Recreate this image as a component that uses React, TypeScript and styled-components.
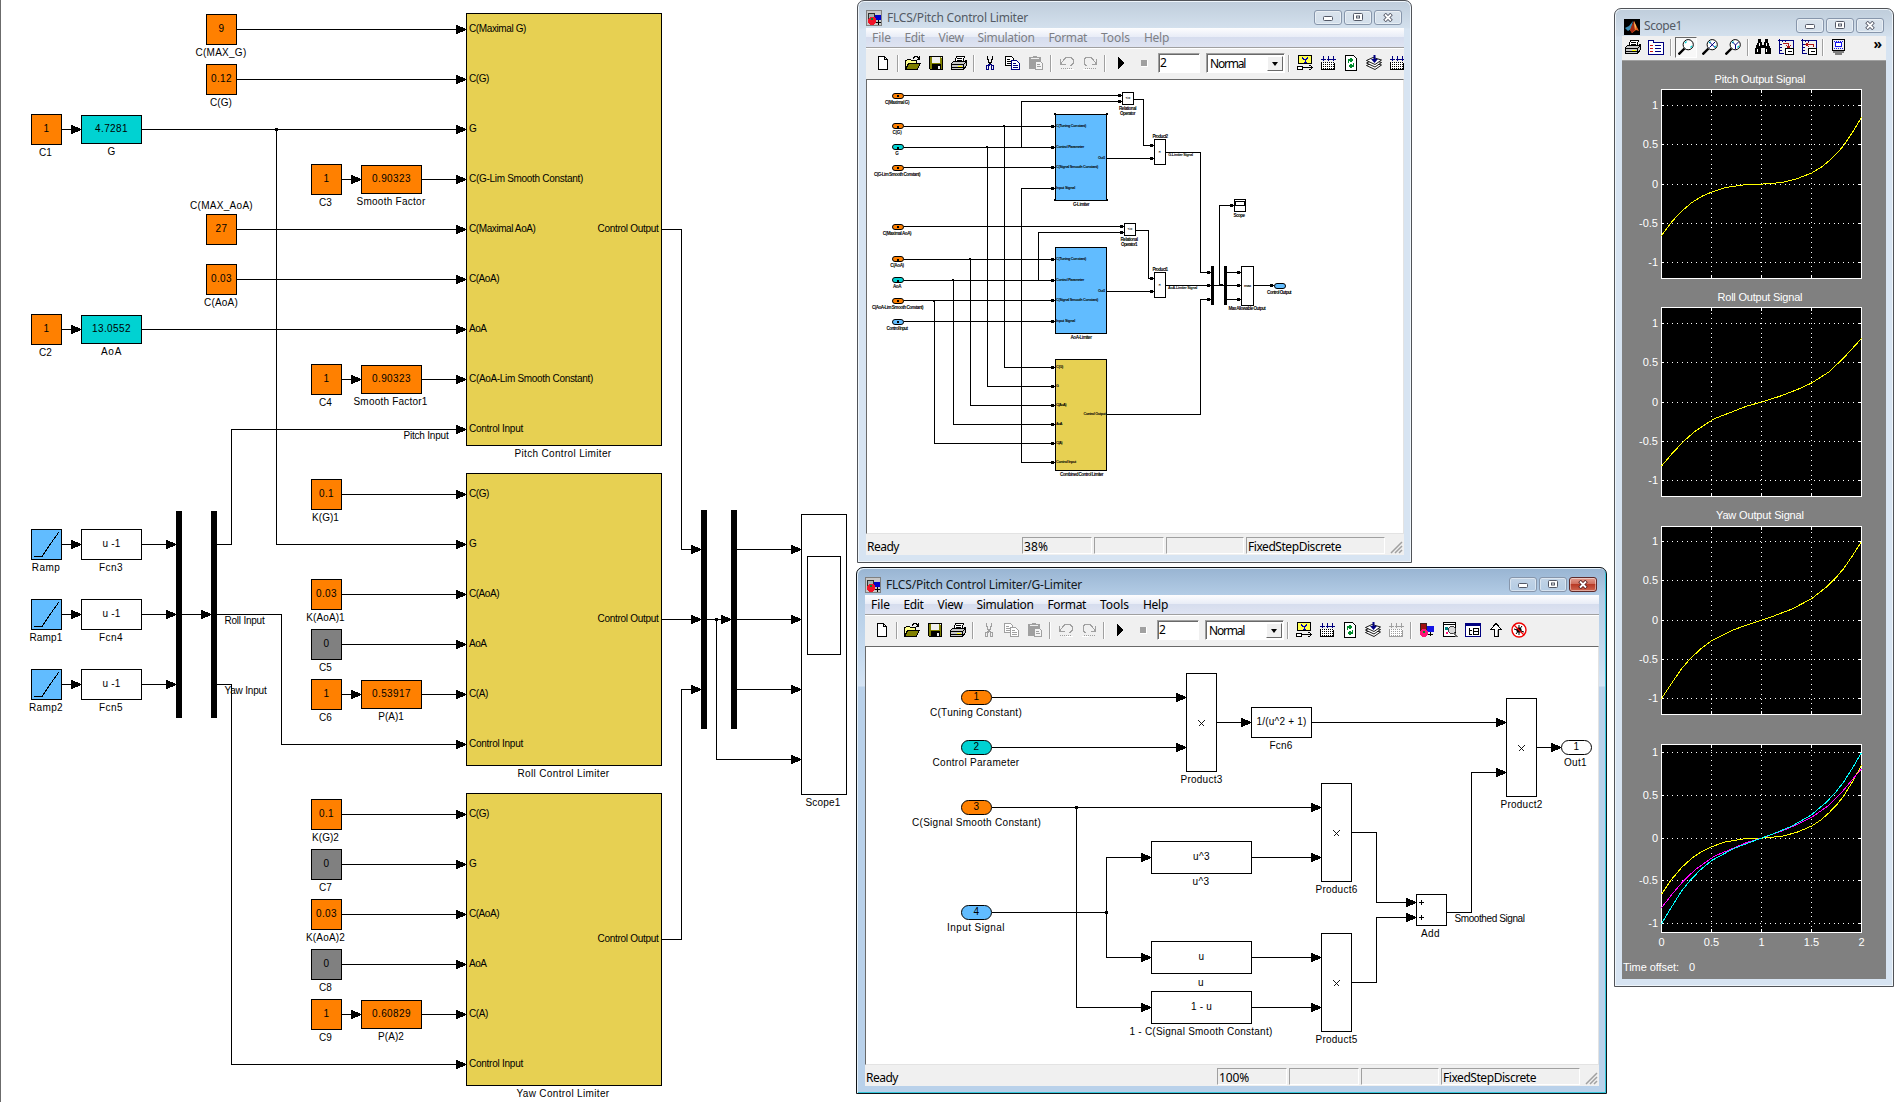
import React from "react";
import styled, { createGlobalStyle, css } from "styled-components";

const Global = createGlobalStyle`
  html, body { margin: 0; padding: 0; background: #fff; }
  body { font-family: "Liberation Sans", Arial, sans-serif; overflow: hidden; }
  * { box-sizing: border-box; }
`;

const ARIAL = '"Liberation Sans", Arial, sans-serif';
const UI = '"Noto Sans", "Open Sans", sans-serif';

/* ---------- text fitted to a known advance width ---------- */

const pen = document.createElement("canvas").getContext("2d")!;
const spacingFor = (text: string, size: number, family: string, width: number, bold?: boolean) => {
  pen.font = `${bold ? "bold " : ""}${size}px ${family}`;
  return (width - pen.measureText(text).width) / text.length;
};

const FitSpan = styled.span<{ $size: number; $ui?: boolean; $bold?: boolean }>`
  display: inline-block;
  white-space: pre;
  font-family: ${(p) => (p.$ui ? UI : ARIAL)};
  font-size: ${(p) => p.$size}px;
  font-weight: ${(p) => (p.$bold ? 700 : 400)};
`;

const Fit = ({ text, w, size = 10, ui, bold }: { text: string; w: number; size?: number; ui?: boolean; bold?: boolean }) => (
  <FitSpan $size={size} $ui={ui} $bold={bold} style={{ letterSpacing: spacingFor(text, size, ui ? UI : ARIAL, w, bold) }}>
    {text}
  </FitSpan>
);

/* ---------- diagram primitives ---------- */

const ORANGE = "#ff8000";
const TEAL = "#00d2d2";
const SKY = "#61bcff";
const GRAY = "#808080";
const GOLD = "#e7d052";

const Sheet = styled.div<{ $x?: number; $y?: number }>`
  position: absolute;
  left: ${(p) => -(p.$x ?? 0)}px;
  top: ${(p) => -(p.$y ?? 0)}px;
  width: 1900px;
  height: 1102px;
  color: #000;
`;

const WireLayer = styled.svg`
  position: absolute;
  left: 0;
  top: 0;
  pointer-events: none;
`;

const BlockBox = styled.div<{ $x: number; $y: number; $w: number; $h: number; $fill: string; $round?: boolean; $size: number }>`
  position: absolute;
  left: ${(p) => p.$x}px;
  top: ${(p) => p.$y}px;
  width: ${(p) => p.$w}px;
  height: ${(p) => p.$h}px;
  background: ${(p) => p.$fill};
  border: 1px solid #000;
  border-radius: ${(p) => (p.$round ? p.$h / 2 : 0)}px;
  display: flex;
  align-items: center;
  justify-content: center;
  font-size: ${(p) => p.$size}px;
  line-height: 10px;
  padding-bottom: 1px;
`;

const LabelBox = styled.div<{ $size: number }>`
  position: absolute;
  font-size: ${(p) => p.$size}px;
  line-height: 12px;
  height: 12px;
  white-space: pre;
`;

const Bar = styled.div<{ $x: number; $y: number; $w: number; $h: number; $color?: string }>`
  position: absolute;
  left: ${(p) => p.$x}px;
  top: ${(p) => p.$y}px;
  width: ${(p) => p.$w}px;
  height: ${(p) => p.$h}px;
  background: ${(p) => p.$color ?? "#000"};
`;

type Lab = [text: string, cx: number, cy: number, w: number];
const Labels = ({ items, size = 10, bold }: { items: Lab[]; size?: number; bold?: boolean }) => (
  <>
    {items.map(([t, cx, cy, w], i) => (
      <LabelBox key={i} $size={size} style={{ left: cx - w / 2, top: Math.round(cy - 6) }}>
        <Fit text={t} w={w} size={size} bold={bold} />
      </LabelBox>
    ))}
  </>
);

type Blk = [x: number, y: number, w: number, h: number, fill: string, text?: string, tw?: number];
const Blocks = ({ items, round, size = 10 }: { items: Blk[]; round?: boolean; size?: number }) => (
  <>
    {items.map(([x, y, w, h, f, t, tw], i) => (
      <BlockBox key={i} $x={x} $y={y} $w={w} $h={h} $fill={f} $round={round} $size={size}>
        {t && <Fit text={t} w={tw ?? 6} size={size} bold={size < 6} />}
      </BlockBox>
    ))}
  </>
);

type Wire = { p: number[]; a?: boolean };
const a = (...p: number[]): Wire => ({ p, a: true });
const l = (...p: number[]): Wire => ({ p });

const Wires = ({ wires, dots = [], small, children }: { wires: Wire[]; dots?: [number, number][]; small?: boolean; children?: React.ReactNode }) => (
  <WireLayer width={1900} height={1102} viewBox="0 0 1900 1102" shapeRendering="crispEdges">
    {wires.map(({ p, a: arrow }, i) => {
      const pts: string[] = [];
      for (let k = 0; k < p.length; k += 2) pts.push(`${p[k] + (k === 0 || k === p.length - 2 ? 0 : 0.5)},${p[k + 1] + 0.5}`);
      const ex = p[p.length - 2];
      const ey = p[p.length - 1] + 0.5;
      const L = small ? 4 : 10;
      const H = small ? 1.5 : 4.5;
      return (
        <g key={i}>
          <polyline points={pts.join(" ")} fill="none" stroke="#000" strokeWidth={1} />
          {arrow && <polygon points={`${ex - L},${ey - H} ${ex - L + 1},${ey - H} ${ex},${ey - 0.5} ${ex},${ey + 0.5} ${ex - L + 1},${ey + H} ${ex - L},${ey + H}`} />}
        </g>
      );
    })}
    {dots.map(([x, y], i) => (
      <rect key={i} x={small ? x : x - 1} y={y - 1} width={small ? 2 : 3} height={small ? 2 : 3} />
    ))}
    {children}
  </WireLayer>
);

/* ---------- top level model ---------- */

const portLabels = (x: number, items: [string, number, number][]): Lab[] => items.map(([t, y, w]) => [t, x + w / 2, y, w]);

const rootBlocks: Blk[] = [
  [206, 14, 31, 31, ORANGE, "9", 6],
  [206, 64, 31, 31, ORANGE, "0.12", 21],
  [31, 114, 31, 31, ORANGE, "1", 6],
  [81, 115, 61, 29, TEAL, "4.7281", 33],
  [311, 164, 31, 31, ORANGE, "1", 6],
  [361, 165, 61, 29, ORANGE, "0.90323", 39],
  [206, 214, 31, 31, ORANGE, "27", 12],
  [206, 264, 31, 31, ORANGE, "0.03", 21],
  [31, 314, 31, 31, ORANGE, "1", 6],
  [81, 315, 61, 29, TEAL, "13.0552", 39],
  [311, 364, 31, 31, ORANGE, "1", 6],
  [361, 365, 61, 29, ORANGE, "0.90323", 39],
  [311, 479, 31, 31, ORANGE, "0.1", 15],
  [311, 579, 31, 31, ORANGE, "0.03", 21],
  [311, 629, 31, 31, GRAY, "0", 6],
  [311, 679, 31, 31, ORANGE, "1", 6],
  [361, 680, 61, 29, ORANGE, "0.53917", 39],
  [311, 799, 31, 31, ORANGE, "0.1", 15],
  [311, 849, 31, 31, GRAY, "0", 6],
  [311, 899, 31, 31, ORANGE, "0.03", 21],
  [311, 949, 31, 31, GRAY, "0", 6],
  [311, 999, 31, 31, ORANGE, "1", 6],
  [361, 1000, 61, 29, ORANGE, "0.60829", 39],
  [31, 529, 31, 31, SKY],
  [31, 599, 31, 31, SKY],
  [31, 669, 31, 31, SKY],
  [81, 529, 61, 31, "#fff", "u -1", 18],
  [81, 599, 61, 31, "#fff", "u -1", 18],
  [81, 669, 61, 31, "#fff", "u -1", 18],
  [466, 13, 196, 433, GOLD],
  [466, 473, 196, 293, GOLD],
  [466, 793, 196, 293, GOLD],
  [801, 514, 46, 281, "#fff"],
  [807, 556, 34, 99, "#fff"],
];

const rootLabels: Lab[] = [
  ["C(MAX_G)", 221, 53, 51],
  ["C(G)", 221, 103, 22],
  ["C1", 45.5, 153, 13],
  ["G", 111.5, 152, 8],
  ["C3", 325.5, 203, 13],
  ["Smooth Factor", 391, 202, 69],
  ["C(MAX_AoA)", 221.5, 206, 63],
  ["C(AoA)", 221, 303, 34],
  ["C2", 45.5, 353, 13],
  ["AoA", 111.5, 352, 21],
  ["C4", 325.5, 403, 13],
  ["Smooth Factor1", 390.5, 402, 74],
  ["K(G)1", 325.5, 518, 27],
  ["K(AoA)1", 325.5, 618, 38.5],
  ["C5", 325.5, 668, 13],
  ["C6", 325.5, 718, 13],
  ["P(A)1", 391, 717, 25.5],
  ["K(G)2", 325.5, 838, 27],
  ["C7", 325.5, 888, 13],
  ["K(AoA)2", 325.5, 938, 39],
  ["C8", 325.5, 988, 13],
  ["C9", 325.5, 1038, 13],
  ["P(A)2", 391, 1037, 26],
  ["Ramp", 46, 568, 28.5],
  ["Ramp1", 46, 638, 33],
  ["Ramp2", 46, 708, 34],
  ["Fcn3", 111, 568, 24],
  ["Fcn4", 111, 638, 24],
  ["Fcn5", 111, 708, 24],
  ["Pitch Control Limiter", 563, 454, 97],
  ["Roll Control Limiter", 563.5, 774, 92],
  ["Yaw Control Limiter", 563, 1094, 93],
  ["Scope1", 823, 803, 35],
  ["Pitch Input", 426, 436, 45],
  ["Roll Input", 244.5, 621, 40],
  ["Yaw Input", 245.5, 691, 42],
  ...portLabels(469, [
    ["C(Maximal G)", 29, 57],
    ["C(G)", 79, 20],
    ["G", 129, 7],
    ["C(G-Lim Smooth Constant)", 179, 114],
    ["C(Maximal AoA)", 229, 67],
    ["C(AoA)", 279, 30],
    ["AoA", 329, 17.5],
    ["C(AoA-Lim Smooth Constant)", 379, 124],
    ["Control Input", 429, 54],
    ["C(G)", 494, 20],
    ["G", 544, 7],
    ["C(AoA)", 594, 30],
    ["AoA", 644, 17.5],
    ["C(A)", 694, 19],
    ["Control Input", 744, 54],
    ["C(G)", 814, 20],
    ["G", 864, 7],
    ["C(AoA)", 914, 30],
    ["AoA", 964, 17.5],
    ["C(A)", 1014, 19],
    ["Control Input", 1064, 54],
  ]),
  ["Control Output", 628, 229, 61],
  ["Control Output", 628, 619, 61],
  ["Control Output", 628, 939, 61],
];

const rootWires: Wire[] = [
  a(237, 29, 466, 29),
  a(237, 79, 466, 79),
  a(62, 129, 81, 129),
  a(142, 129, 466, 129),
  a(342, 179, 361, 179),
  a(422, 179, 466, 179),
  a(237, 229, 466, 229),
  a(237, 279, 466, 279),
  a(62, 329, 81, 329),
  a(142, 329, 466, 329),
  a(342, 379, 361, 379),
  a(422, 379, 466, 379),
  a(217, 544, 231, 544, 231, 429, 466, 429),
  a(276.5, 129, 276, 129, 276, 544, 466, 544),
  a(342, 494, 466, 494),
  a(342, 594, 466, 594),
  a(342, 644, 466, 644),
  a(342, 694, 361, 694),
  a(422, 694, 466, 694),
  a(217, 614, 281, 614, 281, 744, 466, 744),
  a(217, 684, 231, 684, 231, 1064, 466, 1064),
  a(342, 814, 466, 814),
  a(342, 864, 466, 864),
  a(342, 914, 466, 914),
  a(342, 964, 466, 964),
  a(342, 1014, 361, 1014),
  a(422, 1014, 466, 1014),
  ...[544, 614, 684].flatMap((y) => [a(62, y, 81, y), a(142, y, 176, y)]),
  a(182, 614, 211, 614),
  a(662, 229, 681, 229, 681, 549, 701, 549),
  a(662, 619, 701, 619),
  a(662, 939, 681, 939, 681, 689, 701, 689),
  a(707, 619, 731, 619),
  ...[549, 619, 689].map((y) => a(737, y, 801, y)),
  a(716.5, 619, 716, 619, 716, 759, 801, 759),
];

const RootModel = () => (
  <Sheet>
    <Blocks items={rootBlocks} />
    <Bar $x={0} $y={0} $w={1} $h={1102} $color="#6b6b6b" />
    {[176, 211].map((x) => (
      <Bar key={x} $x={x} $y={511} $w={6} $h={207} />
    ))}
    {[701, 731].map((x) => (
      <Bar key={x} $x={x} $y={510} $w={6} $h={219} />
    ))}
    <Wires wires={rootWires} dots={[[276, 129], [716, 619]]}>
      {[0, 70, 140].map((d) => (
        <path key={d} d={`M34 ${556.5 + d}H42L50 ${544.5 + d}L59 ${532 + d}`} fill="none" stroke="#000" />
      ))}
    </Wires>
    <Labels items={rootLabels} />
  </Sheet>
);

/* ---------- pitch control limiter at 38% ---------- */

const p1Ports: Blk[] = [
  [892, 93, 12, 6, ORANGE], [892, 123, 12, 6, ORANGE], [892, 144, 12, 6, TEAL], [892, 165, 12, 6, ORANGE],
  [892, 224, 12, 6, ORANGE], [892, 256, 12, 6, ORANGE], [892, 277, 12, 6, TEAL], [892, 298, 12, 6, ORANGE],
  [892, 319, 12, 6, SKY], [1274, 283, 12, 6, SKY],
];
const p1Blocks: Blk[] = [
  [1122, 92, 12, 13, "#fff", "<=", 5],
  [1124, 223, 12, 13, "#fff", "<=", 5],
  [1055, 114, 52, 87, SKY],
  [1055, 247, 52, 87, SKY],
  [1055, 359, 52, 112, GOLD],
  [1154, 139, 12, 26, "#fff", "×", 3],
  [1154, 272, 12, 26, "#fff", "×", 3],
  [1234, 199, 12, 13, "#fff"],
  [1235, 201, 10, 5, "#fff"],
  [1241, 266, 13, 40, "#fff", "max", 7],
];
const limiterPorts = (y: number): Lab[] => [
  ...portLabels(1056, [
    ["C(Tuning Constant)", y + 12, 30],
    ["Control Parameter", y + 33, 28],
    ["C(Signal Smooth Constant)", y + 53, 42],
    ["Input Signal", y + 74, 19],
  ]),
  ["Out1", 1101.5, y + 44, 7],
];
const p1Labels: Lab[] = [
  ["C(Maximal G)", 897, 102, 24],
  ["C(G)", 897, 132, 9],
  ["G", 897, 153, 3.5],
  ["C(G-Lim Smooth Constant)", 897, 174, 46],
  ["C(Maximal AoA)", 897, 233, 28.5],
  ["C(AoA)", 897, 265, 13.5],
  ["AoA", 897, 286, 8],
  ["C(AoA-Lim Smooth Constant)", 897.5, 307, 51],
  ["Control Input", 897, 328, 21],
  ["G-Limiter", 1081, 204, 16],
  ["AoA-Limiter", 1081, 337, 21],
  ["Combined Control Limiter", 1081.5, 474, 43],
  ["Relational", 1127.5, 108, 17],
  ["Operator", 1127.5, 113, 15],
  ["Relational", 1129, 239, 17],
  ["Operator1", 1129, 244, 16],
  ["Product2", 1160, 136, 15],
  ["Product1", 1160, 269, 15],
  ["Scope", 1239, 215, 11],
  ["Max Allowable Output", 1247, 308, 37],
  ["Control Output", 1279, 292, 24],
];
const p1Signals: Lab[] = [
  ["G-Limiter Signal", 1180.5, 155, 24.5],
  ["AoA-Limiter Signal", 1182.5, 288, 29],
  ...limiterPorts(114),
  ...limiterPorts(247),
  ...portLabels(1056, [
    ["C(G)", 367, 7],
    ["G", 386, 3],
    ["C(AoA)", 405, 10],
    ["AoA", 424, 6],
    ["C(A)", 443, 6],
    ["Control Input", 462, 20],
  ]),
  ["Control Output", 1094.5, 414, 22],
];
const p1Wires: Wire[] = [
  a(904, 95, 1122, 95), a(904, 126, 1055, 126), a(904, 147, 1055, 147), a(904, 167, 1055, 167),
  a(904, 226, 1124, 226), a(904, 259, 1055, 259), a(904, 280, 1055, 280), a(904, 300, 1055, 300), a(904, 321, 1055, 321),
  a(1021.5, 147, 1021, 147, 1021, 101, 1122, 101),
  a(1038.5, 280, 1038, 280, 1038, 232, 1124, 232),
  a(1004.5, 126, 1004, 126, 1004, 367, 1055, 367),
  a(987.5, 147, 987, 147, 987, 386, 1055, 386),
  a(970.5, 259, 970, 259, 970, 405, 1055, 405),
  a(953.5, 280, 953, 280, 953, 424, 1055, 424),
  a(934.5, 300, 934, 300, 934, 443, 1055, 443),
  a(1021.5, 188, 1021, 188, 1021, 462, 1055, 462),
  a(1021, 188, 1055, 188),
  a(1107, 158, 1154, 158), a(1107, 291, 1154, 291),
  a(1134, 99, 1143, 99, 1143, 145, 1154, 145),
  a(1136, 230, 1148, 230, 1148, 278, 1154, 278),
  a(1166, 152, 1200, 152, 1200, 272, 1211, 272),
  a(1166, 285, 1211, 285),
  a(1107, 414, 1200, 414, 1200, 299, 1211, 299),
  l(1214, 285, 1224, 285),
  a(1219.5, 285, 1219, 285, 1219, 205, 1234, 205),
  a(1227, 272, 1241, 272), a(1227, 285, 1241, 285), a(1227, 299, 1241, 299),
  a(1254, 285, 1274, 285),
];

const PitchDiagram = () => (
  <Sheet $x={867} $y={80}>
    <Blocks items={p1Blocks} size={4} />
    <Blocks items={p1Ports} round />
    {[1211, 1224].map((x) => (
      <Bar key={x} $x={x} $y={266} $w={3} $h={39} />
    ))}
    <Wires small wires={p1Wires} dots={[[1003, 126], [986, 147], [969, 259], [952, 280], [933, 301], [1219, 285], [1221, 285]]}>
      {[[1054, 113], [1106, 113], [1054, 199], [1106, 199]].map(([x, y]) => (
        <rect key={`${x}-${y}`} x={x} y={y} width={2} height={2} fill="#000" />
      ))}
      {[95, 126, 147, 167, 226, 259, 280, 300, 321].map((y) => (
        <rect key={y} x={897} y={y} width={2} height={2} fill="#000" />
      ))}
    </Wires>
    <Labels items={p1Labels} size={4.6} bold />
    <Labels items={p1Signals} size={3.8} bold />
  </Sheet>
);

/* ---------- G-limiter at 100% ---------- */

const gBlocks: Blk[] = [
  [1186, 673, 31, 99, "#fff"], [1251, 707, 61, 31, "#fff", "1/(u^2 + 1)", 50], [1506, 698, 31, 99, "#fff"],
  [1321, 783, 31, 99, "#fff"], [1321, 933, 31, 99, "#fff"], [1416, 894, 31, 32, "#fff"],
  [1151, 841, 101, 33, "#fff", "u^3", 17], [1151, 941, 101, 33, "#fff", "u", 6], [1151, 991, 101, 33, "#fff", "1 - u", 21],
];
const gPorts: Blk[] = [
  [961, 690, 31, 15, ORANGE, "1", 6], [961, 740, 31, 15, TEAL, "2", 6], [961, 800, 31, 15, ORANGE, "3", 6],
  [961, 905, 31, 15, SKY, "4", 6], [1561, 740, 31, 15, "#fff", "1", 6],
];
const gLabels: Lab[] = [
  ["C(Tuning Constant)", 976, 712, 92],
  ["Control Parameter", 976, 762, 87],
  ["C(Signal Smooth Constant)", 976.5, 822, 129],
  ["Input Signal", 976, 927, 58],
  ["Product3", 1201.5, 779, 42],
  ["Fcn6", 1281, 745, 23],
  ["Product2", 1521.5, 804, 42],
  ["Product6", 1336.5, 889, 42],
  ["Product5", 1336.5, 1039, 42],
  ["Add", 1430.5, 933, 19],
  ["Out1", 1575.5, 762, 23],
  ["u^3", 1201, 881, 17],
  ["u", 1201, 982, 6],
  ["1 - C(Signal Smooth Constant)", 1201, 1031, 143],
  ["Smoothed Signal", 1489.5, 918, 70],
];
const gWires: Wire[] = [
  a(992, 697, 1186, 697), a(992, 747, 1186, 747), a(1217, 722, 1251, 722), a(1312, 722, 1506, 722),
  a(992, 807, 1321, 807), l(992, 912, 1106, 912), a(1106.5, 912, 1106, 912, 1106, 857, 1151, 857),
  a(1106.5, 912, 1106, 912, 1106, 957, 1151, 957), a(1076.5, 807, 1076, 807, 1076, 1007, 1151, 1007),
  a(1252, 857, 1321, 857), a(1252, 957, 1321, 957), a(1252, 1007, 1321, 1007),
  a(1352, 832, 1376, 832, 1376, 902, 1416, 902), a(1352, 982, 1376, 982, 1376, 917, 1416, 917),
  a(1447, 912, 1471, 912, 1471, 772, 1506, 772), a(1537, 747, 1561, 747),
];
const LimiterDiagram = () => (
  <Sheet $x={866} $y={647}>
    <Blocks items={gBlocks} />
    <Blocks items={gPorts} round />
    <Wires wires={gWires} dots={[[1076, 807], [1106, 912]]}>
      {[[1201, 722], [1521, 747], [1336, 832], [1336, 982]].map(([x, y]) => (
        <path key={`${x}${y}`} d={`M${x - 2.5} ${y - 2.5}l6 6m0 -6l-6 6`} stroke="#000" strokeWidth={0.9} fill="none" />
      ))}
      {[902, 917].map((y) => (
        <path key={y} d={`M1419 ${y + 0.5}h5M1421.5 ${y - 2}v5`} stroke="#000" fill="none" />
      ))}
    </Wires>
    <Labels items={gLabels} />
  </Sheet>
);

/* ---------- icons ---------- */

const Svg16 = ({ children, w = 16 }: { children: React.ReactNode; w?: number }) => (
  <svg width={w} height={16} viewBox={`0 0 ${w} 16`} shapeRendering="crispEdges" fill="none">
    {children}
  </svg>
);

const NewIcon = () => (
  <Svg16><path d="M3.5 1.5h6l3 3v10h-9zM9.5 1.5v3h3" fill="#fff" stroke="#000" /></Svg16>
);
const OpenIcon = () => (
  <Svg16>
    <path d="M.5 14.5v-9h1l1-1h3l1 1h5v3" fill="#ffff8c" stroke="#000" />
    <path d="M.5 14.5l3-6h12l-3.5 6z" fill="#808000" stroke="#000" />
    <path d="M8.5 3.5v-1h1v-1h3v1h1v1h1M14.5 1v3.5M12 4.5h3" stroke="#000" />
  </Svg16>
);
const SaveIcon = () => (
  <Svg16>
    <path d="M1.5 1.5h13v13h-12l-1-1z" fill="#808000" stroke="#000" />
    <rect x="4" y="2" width="8" height="6" fill="#f0f0f0" />
    <path d="M4 9h9v6h-9z" fill="#000" />
    <path d="M10 11h2v3h-2zM13 2h1v1h-1z" fill="#f0f0f0" />
  </Svg16>
);
const PrintIcon = () => (
  <Svg16>
    <path d="M5.5 1.5h8l-2 6h-8z" fill="#fff" stroke="#000" />
    <path d="M6 3.5h5M5.5 5.5h5" stroke="#000" />
    <path d="M.5 8.5l2-2h11l2-1v5l-3 4h-12z" fill="#c8c8c8" stroke="#000" />
    <path d="M.5 9.5h12l3-3M12.5 9.5v5M1 12.5h11" stroke="#000" />
    <rect x="7" y="11" width="4" height="1" fill="#ff0" />
  </Svg16>
);
const CutIcon = ({ c = "#000", b = "#000080" }) => (
  <Svg16>
    <path d="M5.5 1v3l1 1v2l1 1v1M10.5 1v3l-1 1v2l-1 1v1" stroke={c} />
    <path d="M7.5 9l-1 1h-2v4h2v-3l1-1M8.5 9l1 1h2v4h-2v-3" stroke={b} />
  </Svg16>
);
const CopyIcon = ({ c = "#000080", k = "#000" }) => (
  <Svg16>
    <path d="M.5 1.5h6l2 2v7h-8z" fill="#fff" stroke={k} />
    <path d="M2 4.5h3M2 6.5h4M2 8.5h4" stroke={k} />
    <path d="M6.5 5.5h5l3 3v6h-8z" fill="#fff" stroke={c} />
    <path d="M8 8.5h3M8 10.5h5M8 12.5h5" stroke={c} />
  </Svg16>
);
const PasteIcon = () => (
  <Svg16>
    <path d="M1 2h4v-1h4v1h4v6h-5v6h-7z" fill="#a0a0a0" />
    <path d="M3 3.5h8" stroke="#f0f0f0" />
    <path d="M7.5 6.5h5l2 2v6h-7z" fill="#f5f5f5" stroke="#a0a0a0" />
    <path d="M9 9.5h3M9 11.5h4" stroke="#a0a0a0" />
  </Svg16>
);
const UndoIcon = ({ flip }: { flip?: boolean }) => (
  <Svg16>
    <g transform={flip ? "translate(16 0) scale(-1 1)" : undefined}>
      <path d="M1.5 4v5h5M2 8.500l3-4 2-2h5l2 2v4l-2 2h-1" stroke="#a0a0a0" />
      <path d="M8 13.5h6M2 13.5h5" stroke="#a0a0a0" strokeDasharray="1 1" />
      <path d="M8 14.5h7" stroke="#fff" />
    </g>
  </Svg16>
);
const PlayIcon = () => (
  <Svg16><path d="M5 2l6 6-6 6z" fill="#000" /></Svg16>
);
const StopIcon = () => (
  <Svg16><path d="M5 5h6v6H5z" fill="#a0a0a0" /><path d="M5 11.5h7M11.5 5v7" stroke="#fff" /></Svg16>
);
const LibIcon = () => (
  <Svg16>
    <rect x="1.5" y=".5" width="13" height="8" fill="#ffff4d" stroke="#000" />
    <path d="M5.5 2v1l1 1 1 1M10.500 2v1l-1 1-1 1M8 5v2M7 7.500h3" stroke="#0000b4" />
    <path d="M.5 11.5h5v3h-5z" fill="#fff" stroke="#000" />
    <path d="M6 12.5h9M12.500 10l3 2.500-3 2.500" stroke="#000" />
  </Svg16>
);
const BuildIcon = ({ c = "#000", b = "#000080" }) => (
  <Svg16>
    <path d="M3.5 1v5M8.5 1v5M13.5 1v5M1 4.5h5M6.5 4.500h4M11 4.5h5" stroke={b} />
    <rect x="1" y="7" width="14" height="8" fill="#fff" />
    <path d="M1 7.5h14M1 9.5h14M1 11.5h14M1 13.5h14" stroke={c} strokeDasharray="1 1" />
    <path d="M1.5 8v6.500h13v-6.500" stroke={c} />
  </Svg16>
);
const RefreshIcon = () => (
  <Svg16>
    <path d="M2.5.5h8l3 3v12h-11z" fill="#fff" stroke="#000" />
    <path d="M5.5 8v-3h3M7.5 3l2 2-2 2M10.5 8v3h-3M8.5 9l-2 2 2 2" stroke="#008c2c" strokeWidth={1.2} />
  </Svg16>
);
const StackIcon = () => (
  <svg width={16} height={16} viewBox="0 0 16 16" fill="none">
    {[6, 3.5, 1].map((d) => (
      <path key={d} d={`M.5 ${4.5 + d}l6.500-3 8.500 2.500-6.500 4.500z`} fill="#fff" stroke="#000" strokeWidth={0.9} />
    ))}
    <path d="M8.5 0v5" stroke="#000080" strokeWidth={2} />
    <path d="M5 4h7L8.5 8z" fill="#000080" />
  </svg>
);
const ModelIcon = () => (
  <Svg16>
    <rect x="1.5" y="1.5" width="6" height="7" fill="#a01010" stroke="#402020" />
    <rect x="8" y="4" width="7" height="6" fill="#1414e6" />
    <circle cx="5" cy="11" r="4" fill="#ff1478" />
    <path d="M11.5 10v4M9 12.5h5" stroke="#000" /><path d="M4 9h2v2H4z" fill="#008c2c" />
  </Svg16>
);
const FindIcon = () => (
  <Svg16>
    <rect x="1.5" y=".5" width="12" height="14" fill="#fff" stroke="#000" />
    <path d="M2 2.5h11" stroke="#000" strokeWidth={1} />
    <rect x="3" y="5" width="3" height="3" fill="#008080" /><circle cx="5" cy="11" r="1.5" fill="#ff1478" />
    <circle cx="10" cy="8" r="3.5" fill="#d8d8d8" stroke="#404040" /><path d="M12 11l3 4" stroke="#666" strokeWidth={2} />
  </Svg16>
);
const BrowserIcon = () => (
  <Svg16>
    <rect x=".5" y="1.5" width="15" height="13" fill="#fff" stroke="#000080" />
    <path d="M1 3h14" stroke="#000080" strokeWidth={2} />
    <path d="M4.5 6v7M4 8.5h3M4 12.5h3" stroke="#000" /><path d="M8.5 6.5h5v6h-5zM9 9.5h4" stroke="#000" />
  </Svg16>
);
const UpIcon = () => (
  <Svg16><path d="M8 1.5l5.5 6h-3v7h-4v-7h-4z" fill="#fff" stroke="#000" /><path d="M9 8v6" stroke="#b0b0b0" /></Svg16>
);
const DebugIcon = () => (
  <svg width={16} height={16} viewBox="0 0 16 16" fill="none">
    <circle cx="8" cy="8" r="7" stroke="#f00000" strokeWidth={1.4} fill="#fff" />
    <circle cx="8" cy="8" r="2.6" fill="#000" /><path d="M3 7l10 3M5 12l6-8M8 3v10" stroke="#000" />
    <path d="M3 3l10 10" stroke="#f00000" strokeWidth={1.3} />
  </svg>
);
const AppIcon = () => (
  <Svg16>
    <rect x=".5" y=".5" width="15" height="15" fill="#c8c8c8" stroke="#808080" />
    <path d="M2.500 3.500h6v5h-6z" stroke="#303030" fill="#a8b0b0" />
    <rect x="9" y="5" width="6" height="5" fill="#0000c8" />
    <path d="M2 9l3-2h3l2 2v3l-2 3h-4l-2-3z" fill="#f01428" />
    <path d="M10 12.5h5M12.5 10v5" stroke="#000" /><path d="M5 8h2v2H5z" fill="#008c2c" />
  </Svg16>
);
const MatlabIcon = () => (
  <svg width={16} height={16} viewBox="0 0 16 16">
    <rect width="16" height="16" fill="#000" />
    <path d="M1 9l4-2 4-5-2 8-3 2z" fill="#3c8cb4" />
    <path d="M10 2l5 10-3-1-4 3-2-3z" fill="#e6641e" /><path d="M10 2l1 9-3 3-2-3z" fill="#a02814" /><path d="M10 2l2 5-1 4z" fill="#ffc864" />
  </svg>
);
const ParamsIcon = () => (
  <Svg16>
    <path d="M.5 15.500v-14h5v2h10v12z" fill="#fff" stroke="#000080" />
    <path d="M2 6.5h3M2 9.5h3M2 12.5h3" stroke="#c81414" /><path d="M7 6.5h6M7 9.5h6M7 12.5h6" stroke="#000080" />
  </Svg16>
);
const ZoomIcon = ({ mark }: { mark?: "x" | "y" }) => (
  <svg width={16} height={16} viewBox="0 0 16 16" fill="none">
    <path d="M6.500 9.500l-6 6" stroke="#000" strokeWidth={2.4} />
    <circle cx="10.2" cy="5.7" r="5.1" fill="#fff" stroke="#000" />
    <path d="M7 4l1.500-1.500M12.500 8.500l1.500-1.500" stroke="#00d2d2" strokeWidth={1.3} />
    {mark === "x" && <path d="M7.500 3l5.500 5.500M13 3l-5.500 5.500" stroke="#000080" />}
    {mark === "y" && <path d="M7.500 3l3 3 3-3M10.5 6v4" stroke="#000080" />}
  </svg>
);
const BinocularsIcon = () => (
  <Svg16>
    <path d="M3 0h3v3h1v3h2v-3h1v-3h3v3l3 7v5h-6v-6h-4v6H0v-5l3-7z" fill="#000" />
    <path d="M4.5 4v3M11.5 4v3M2.5 10v3M11.5 10v3" stroke="#fff" />
  </Svg16>
);
const AxesIcon = ({ back }: { back?: boolean }) => (
  <Svg16>
    <path d="M1.5 0v15M0 1.5h16M15.5 1v8" stroke="#000080" />
    <path d="M2 5.5h2M2 8.5h2M2 11.5h2M2 14.5h4M4.5 2v1M7.5 2v1" stroke="#000080" />
    <path d={back ? "M12.5 8v-3h-7M8 3l-3 2.500 3 2.500" : "M5 4.5h5.500v4M8 6l2.500 3 2.500-3"} stroke="#b41414" />
    <rect x="7.5" y="9.5" width="8" height="6" fill="#fff" stroke="#000" /><path d="M10 12.5h4" stroke="#000" />
  </Svg16>
);
const ChipIcon = () => (
  <Svg16>
    <rect x="2.5" y=".5" width="12" height="11" rx="1" fill="#f0f0f0" stroke="#000" />
    <rect x="5.5" y="3.5" width="6" height="4" fill="#fff" stroke="#1414f0" />
    <path d="M4 2.5h9M4 9.5h9" stroke="#1414f0" strokeDasharray="1 1" />
    <path d="M3 13h11M5 15h7" stroke="#808080" strokeWidth={1.6} />
  </Svg16>
);

/* ---------- window chrome ---------- */

const WindowFrame = styled.section<{ $x: number; $y: number; $w: number; $h: number; $active?: boolean; $edge?: number }>`
  position: absolute;
  left: ${(p) => p.$x}px;
  top: ${(p) => p.$y}px;
  width: ${(p) => p.$w}px;
  height: ${(p) => p.$h}px;
  display: flex;
  flex-direction: column;
  padding: 0 7px 7px ${(p) => p.$edge ?? 8}px;
  border: 1px solid #505358;
  border-radius: 7px 7px 0 0;
  overflow: hidden;
  font-family: ${UI};
  font-size: 12px;
  background: linear-gradient(#bfcddb 0, #d3e0ed 27px, #d7e4f2 28px);
  box-shadow: inset 0 0 0 1px #eef5fb;
  ${(p) =>
    p.$active &&
    css`
      border-color: #101418;
      background: linear-gradient(#98b4d2 0, #b3cce5 27px, #c8dcf0 90px, #d5e4f4 118px, #b9d1ea 119px);
      box-shadow: inset 1px 1px 0 #e6f2fb, inset -1px -1px 0 #34c6da;
    `}
`;

const TitleBar = styled.header<{ $active?: boolean }>`
  display: flex;
  align-items: center;
  flex: none;
  height: 27px;
  padding-top: 5px;
  padding-right: 2px;
  line-height: 18px;
  color: ${(p) => (p.$active ? "#141a22" : "#535a64")};
`;
const TitleIcon = styled.span`
  display: flex;
  margin: 1px 5px 0 0;
`;
const TitleText = styled.span`
  flex: 1;
  padding-top: 2px;
`;
const Caption = styled.span<{ $red?: boolean }>`
  display: flex;
  align-items: center;
  justify-content: center;
  width: 28px;
  height: 15px;
  margin-left: 2px;
  border: 1px solid #8796ab;
  border-radius: 3px;
  box-shadow: inset 0 0 0 1px rgba(255, 255, 255, 0.45);
  background: ${(p) => (p.$red ? "linear-gradient(#e29d90 0, #cf6c5a 48%, #b83a25 50%, #cf6650)" : "linear-gradient(rgba(255,255,255,.35), rgba(255,255,255,.08))")};
  ${(p) => p.$red && "border-color: #5e2a2a;"}
`;

const Captions = ({ active }: { active?: boolean }) => (
  <>
    <Caption>
      <svg width="12" height="9"><rect x="1.5" y="3.5" width="9" height="4" rx="1" fill="#fff" stroke="#535866" /></svg>
    </Caption>
    <Caption>
      <svg width="12" height="9"><rect x="1.5" y=".5" width="9" height="7" rx="1" fill="#fff" stroke="#535866" /><rect x="4.5" y="3" width="3" height="2" fill="#fff" stroke="#535866" /></svg>
    </Caption>
    <Caption $red={active}>
      <svg width="12" height="9">
        <path d="M2.500 1l7 7M9.500 1l-7 7" stroke={active ? "#5a2020" : "#535866"} strokeWidth="3.6" />
        <path d="M3 1.500l6 6M9 1.500l-6 6" stroke="#fff" strokeWidth="1.8" />
      </svg>
    </Caption>
  </>
);

const MenuBar = styled.nav<{ $active?: boolean }>`
  display: flex;
  flex: none;
  align-items: center;
  height: 19px;
  padding: 1px 0 0 6px;
  line-height: 18px;
  background: linear-gradient(#fdfdfe 0, #e9edf7 45%, #d6ddee 50%, #dfe4f2 100%);
  color: ${(p) => (p.$active ? "#000" : "#7d7f85")};
`;
const MenuItem = styled.span<{ $w: number }>`
  width: ${(p) => p.$w}px;
`;
const menus: [string, number, number][] = [
  ["File", 32.5, 19], ["Edit", 34, 20], ["View", 39, 25], ["Simulation", 71, 57], ["Format", 52.5, 38.5], ["Tools", 43, 29], ["Help", 30, 25],
];

const ToolBar = styled.div`
  display: flex;
  flex: none;
  align-items: center;
  height: 32px;
  padding: 0 0 1px 5px;
  border-top: 1px solid #a0a0a0;
  box-shadow: inset 0 1px 0 #fff;
  background: #f0f0f0;
  overflow: hidden;
`;
const Tool = styled.span`
  display: flex;
  flex: none;
  justify-content: center;
  width: 23px;
`;
const Sep = styled.i<{ $w?: number }>`
  flex: none;
  width: 2px;
  height: 17px;
  margin: 0 ${(p) => ((p.$w ?? 8) - 2) / 2}px;
  border-left: 1px solid #a0a0a0;
  border-right: 1px solid #fff;
`;
const sunken = css`
  border: 1px solid;
  border-color: #a0a0a0 #fff #fff #a0a0a0;
  box-shadow: inset 1px 1px 0 #696969;
`;
const TimeField = styled.span`
  ${sunken}
  flex: none;
  width: 42px;
  height: 20px;
  margin-left: 3px;
  padding-left: 1px;
  line-height: 18px;
  background: #fff;
`;
const ModeField = styled.span`
  ${sunken}
  display: flex;
  flex: none;
  justify-content: space-between;
  width: 79px;
  height: 20px;
  margin-left: 6px;
  padding: 2px 1px 1px 3px;
  line-height: 15px;
  background: #fff;
`;
const DropButton = styled.span`
  display: flex;
  align-items: center;
  justify-content: center;
  width: 16px;
  background: #f0f0f0;
  border: 1px solid;
  border-color: #fff #696969 #696969 #fff;
  &::after {
    content: "";
    border: 3.5px solid transparent;
    border-top: 4px solid #000;
    border-bottom: 0;
  }
`;

const Canvas = styled.div`
  position: relative;
  flex: 1;
  min-height: 0;
  overflow: hidden;
  background: #fff;
  border: 1px solid;
  border-color: #696969 #e3e3e3 #e3e3e3 #696969;
`;
const StatusBar = styled.footer`
  display: flex;
  flex: none;
  align-items: flex-end;
  gap: 2px;
  height: 21px;
  padding: 0 0 1px 1px;
  background: #f0f0f0;
  color: #000;
`;
const StatusText = styled.span`
  flex: 1;
  height: 17px;
  line-height: 19px;
`;
const StatusCell = styled.span<{ $w: number }>`
  flex: none;
  width: ${(p) => p.$w}px;
  height: 17px;
  padding-left: 1px;
  line-height: 17px;
  border: 1px solid;
  border-color: #a0a0a0 #fff #fff #a0a0a0;
`;
const Grip = styled.svg`
  margin-left: 3px;
`;

const ModelWindow = ({ x, y, w, h, title, tw, active, zoom, children }: {
  x: number; y: number; w: number; h: number; title: string; tw: number; active?: boolean; zoom: [string, number]; children: React.ReactNode;
}) => (
  <WindowFrame $x={x} $y={y} $w={w} $h={h} $active={active}>
    <TitleBar $active={active}>
      <TitleIcon><AppIcon /></TitleIcon>
      <TitleText><Fit ui size={12} text={title} w={tw} /></TitleText>
      <Captions active={active} />
    </TitleBar>
    <MenuBar $active={active}>
      {menus.map(([t, slot, mw]) => (
        <MenuItem key={t} $w={slot}><Fit ui size={12} text={t} w={mw} /></MenuItem>
      ))}
    </MenuBar>
    <ToolBar>
      <Tool><NewIcon /></Tool>
      <Sep $w={7} />
      <Tool><OpenIcon /></Tool>
      <Tool><SaveIcon /></Tool>
      <Tool><PrintIcon /></Tool>
      <Sep />
      <Tool>{active ? <CutIcon c="#a0a0a0" b="#a0a0a0" /> : <CutIcon />}</Tool>
      <Tool>{active ? <CopyIcon c="#a0a0a0" k="#a0a0a0" /> : <CopyIcon />}</Tool>
      <Tool><PasteIcon /></Tool>
      <Sep />
      <Tool><UndoIcon /></Tool>
      <Tool><UndoIcon flip /></Tool>
      <Sep />
      <Tool><PlayIcon /></Tool>
      <Tool><StopIcon /></Tool>
      <TimeField><Fit ui size={12} text="2" w={7} /></TimeField>
      <ModeField><Fit ui size={12} text="Normal" w={35} /><DropButton /></ModeField>
      <Sep $w={8} />
      <Tool><LibIcon /></Tool>
      <Tool><BuildIcon /></Tool>
      <Tool><RefreshIcon /></Tool>
      <Tool><StackIcon /></Tool>
      <Tool><BuildIcon c={active ? "#a0a0a0" : "#000"} b={active ? "#a0a0a0" : "#000080"} /></Tool>
      {active && (
        <>
          <Sep />
          <Tool><ModelIcon /></Tool>
          <Tool><FindIcon /></Tool>
          <Tool><BrowserIcon /></Tool>
          <Tool><UpIcon /></Tool>
          <Tool><DebugIcon /></Tool>
        </>
      )}
    </ToolBar>
    <Canvas>{children}</Canvas>
    <StatusBar>
      <StatusText><Fit ui size={12} text="Ready" w={32} /></StatusText>
      <StatusCell $w={70}><Fit ui size={12} text={zoom[0]} w={zoom[1]} /></StatusCell>
      <StatusCell $w={70} />
      <StatusCell $w={78} />
      <StatusCell $w={139}><Fit ui size={12} text="FixedStepDiscrete" w={93} /></StatusCell>
      <Grip width="14" height="14"><path d="M1 13L12 2M5 13L12 6M9 13L12 10" stroke="#a0a0a0" strokeWidth="1.5" /></Grip>
    </StatusBar>
  </WindowFrame>
);

/* ---------- scope ---------- */

const ScopeTools = styled.div`
  display: flex;
  flex: none;
  align-items: center;
  height: 24px;
  padding-bottom: 2px;
  background: #f0f0f0;
`;
const FirstTool = styled(Tool)`
  width: 22px;
  padding-right: 1px;
`;
const Pressed = styled(Tool)`
  width: 22px;
  height: 21px;
  align-items: center;
  border: 1px solid;
  border-color: #696969 #fff #fff #696969;
  background: #f8f8f8;
  margin: 0 1px 0 0;
`;
const More = styled.span`
  margin-left: auto;
  padding-right: 4px;
  font: bold 14px/14px ${UI};
  color: #000;
  padding-bottom: 7px;
`;
const ScopeBody = styled.div`
  flex: 1;
  display: flex;
  flex-direction: column;
  border-top: 1px solid #a0a0a0;
  background: #808080;
  svg { display: block; }
`;
const TimeRow = styled.div`
  display: flex;
  gap: 10px;
  padding: 9px 0 0 1px;
  font-size: 11px;
  line-height: 14px;
  color: #fff;
`;

const pitch: [number, number][] = [[0, -0.655], [0.1, -0.484], [0.2, -0.346], [0.303, -0.235], [0.4, -0.158], [0.5, -0.102], [0.637, -0.045], [0.82, -0.01], [1, 0], [1.203, 0.02], [1.353, 0.068], [1.5, 0.14], [1.6, 0.218], [1.67, 0.29], [1.76, 0.4], [1.82, 0.49], [1.91, 0.66], [2, 0.85]];
const roll: [number, number][] = [[0, -0.815], [0.103, -0.66], [0.22, -0.5], [0.337, -0.37], [0.5, -0.234], [0.537, -0.208], [0.853, -0.051], [1, 0], [1.187, 0.076], [1.353, 0.157], [1.5, 0.242], [1.67, 0.38], [1.82, 0.56], [2, 0.811]];
const yaw: [number, number][] = [[0, -1], [0.12, -0.77], [0.2, -0.62], [0.287, -0.493], [0.39, -0.37], [0.5, -0.263], [0.72, -0.123], [0.92, -0.034], [1, 0], [1.12, 0.051], [1.303, 0.14], [1.5, 0.272], [1.653, 0.425], [1.74, 0.535], [1.82, 0.654], [1.91, 0.82], [2, 1]];

type Curve = [string, [number, number][]];
const Plot = ({ title, tw = 0, top, zero, scale, curves, xTicks }: {
  title?: string; tw?: number; top: number; zero: number; scale: number; curves: Curve[]; xTicks?: boolean;
}) => {
  const X = (t: number) => 39.5 + t * 100;
  const Y = (v: number) => Math.round(zero - v * scale) + 0.5;
  const bottom = 217.5;
  return (
    <svg width={264} height={xTicks ? 236 : 218} fontFamily={ARIAL} fontSize={11} fill="#fff">
      {title && <text x={138 - tw / 2} y={22} textLength={tw}>{title}</text>}
      <g shapeRendering="crispEdges" fill="none" stroke="#fff">
        <rect x={39.5} y={top + 0.5} width={200} height={bottom - top - 0.5} fill="#000" />
        {[1, 0.5, 0, -0.5, -1].map((v) => (
          <g key={v}>
            <path d={`M40 ${Y(v)}H239`} strokeDasharray="1 3.9" />
            <path d={`M40 ${Y(v)}h2M237 ${Y(v)}h2`} />
          </g>
        ))}
        {[0.5, 1, 1.5].map((t) => (
          <g key={t}>
            <path d={`M${X(t)} ${top + 1}V217`} strokeDasharray="1 3.9" />
            <path d={`M${X(t)} ${top + 1}v3M${X(t)} 214v3`} />
          </g>
        ))}
        {curves.map(([c, pts]) => (
          <polyline key={c} stroke={c} points={pts.map(([t, v]) => `${X(t)},${zero - v * scale + 0.5}`).join(" ")} />
        ))}
      </g>
      {[1, 0.5, 0, -0.5, -1].map((v) => (
        <text key={v} x={36} y={Y(v) + 3} textAnchor="end">{v}</text>
      ))}
      {xTicks && [0, 0.5, 1, 1.5, 2].map((t) => (
        <text key={t} x={X(t)} y={231} textAnchor="middle">{t}</text>
      ))}
    </svg>
  );
};

const ScopeTitleIcon = styled(TitleIcon)`
  margin: 3px 4px 0 2px;
`;

const ScopeWindow = () => (
  <WindowFrame $x={1614} $y={8} $w={280} $h={979} $edge={7}>
    <TitleBar>
      <ScopeTitleIcon><MatlabIcon /></ScopeTitleIcon>
      <TitleText><Fit ui size={12} text="Scope1" w={38} /></TitleText>
      <Captions />
    </TitleBar>
    <ScopeTools>
      <FirstTool><PrintIcon /></FirstTool>
      <Tool><ParamsIcon /></Tool>
      <Sep />
      <Pressed><ZoomIcon /></Pressed>
      <Tool><ZoomIcon mark="x" /></Tool>
      <Tool><ZoomIcon mark="y" /></Tool>
      <Sep $w={7} />
      <Tool><BinocularsIcon /></Tool>
      <Tool><AxesIcon /></Tool>
      <Tool><AxesIcon back /></Tool>
      <Sep $w={6} />
      <Tool><ChipIcon /></Tool>
      <More>»</More>
    </ScopeTools>
    <ScopeBody>
      <Plot title="Pitch Output Signal" tw={91} top={28} zero={122.6} scale={78.5} curves={[["#ff0", pitch]]} />
      <Plot title="Roll Output Signal" tw={85} top={28} zero={122.6} scale={78.5} curves={[["#ff0", roll]]} />
      <Plot title="Yaw Output Signal" tw={88} top={29} zero={122.6} scale={78.5} curves={[["#ff0", yaw]]} />
      <Plot top={29} zero={122.6} scale={85.5} xTicks curves={[["#ff0", pitch], ["#f0f", roll], ["#0ff", yaw]]} />
      <TimeRow>
        <Fit size={11} text="Time offset:" w={56} />
        <Fit size={11} text="0" w={7} />
      </TimeRow>
    </ScopeBody>
  </WindowFrame>
);

const Desktop = styled.main`
  position: relative;
  width: 1900px;
  height: 1102px;
  overflow: hidden;
  background: #fff;
`;

export default function App() {
  return (
    <Desktop>
      <Global />
      <RootModel />
      <ModelWindow x={857} y={0} w={555} h={563} title="FLCS/Pitch Control Limiter" tw={141} zoom={["38%", 24]}>
        <PitchDiagram />
      </ModelWindow>
      <ModelWindow x={856} y={567} w={751} h={527} title="FLCS/Pitch Control Limiter/G-Limiter" tw={196} zoom={["100%", 30]} active>
        <LimiterDiagram />
      </ModelWindow>
      <ScopeWindow />
    </Desktop>
  );
}
